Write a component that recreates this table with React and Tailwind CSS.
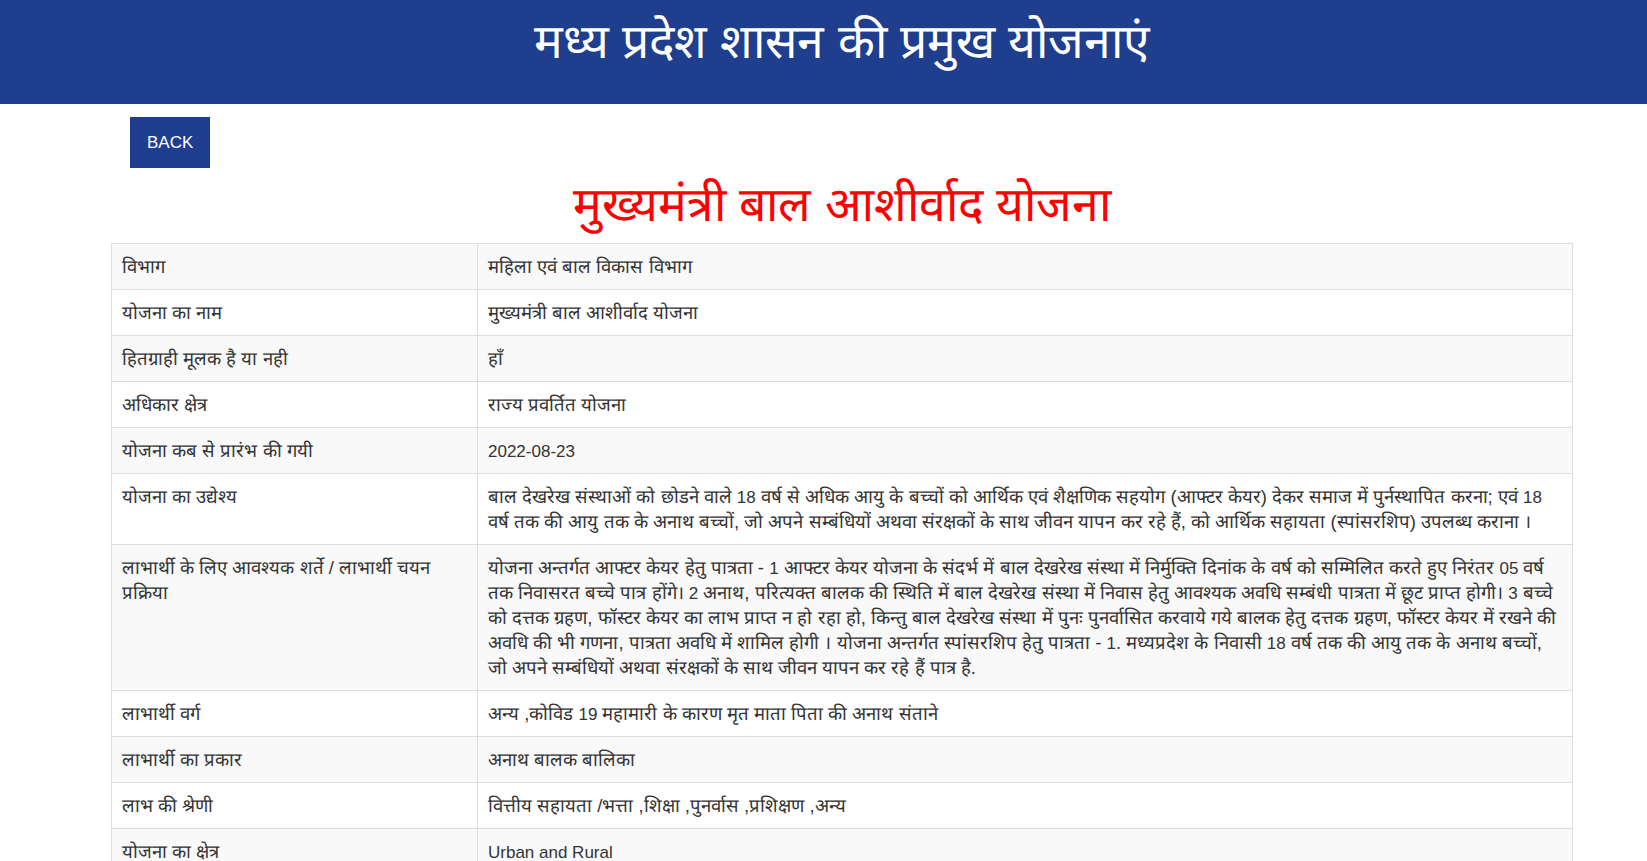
import React from "react";

const rows = [
  ["विभाग", "महिला एवं बाल विकास विभाग"],
  ["योजना का नाम", "मुख्यमंत्री बाल आशीर्वाद योजना"],
  ["हितग्राही मूलक है या नही", "हाँ"],
  ["अधिकार क्षेत्र", "राज्य प्रवर्तित योजना"],
  ["योजना कब से प्रारंभ की गयी", "2022-08-23"],
  [
    "योजना का उद्येश्य",
    "बाल देखरेख संस्थाओं को छोडने वाले 18 वर्ष से अधिक आयु के बच्चों को आर्थिक एवं शैक्षणिक सहयोग (आफ्टर केयर) देकर समाज में पुर्नस्थापित करना; एवं 18 वर्ष तक की आयु तक के अनाथ बच्चों, जो अपने सम्बंधियों अथवा संरक्षकों के साथ जीवन यापन कर रहे हैं, को आर्थिक सहायता (स्पांसरशिप) उपलब्ध कराना ।",
  ],
  [
    "लाभार्थी के लिए आवश्यक शर्ते / लाभार्थी चयन प्रक्रिया",
    "योजना अन्तर्गत आफ्टर केयर हेतु पात्रता - 1 आफ्टर केयर योजना के संदर्भ में बाल देखरेख संस्था में निर्मुक्ति दिनांक के वर्ष को सम्मिलित करते हुए निरंतर 05 वर्ष तक निवासरत बच्चे पात्र होंगे। 2 अनाथ, परित्यक्त बालक की स्थिति में बाल देखरेख संस्था में निवास हेतु आवश्यक अवधि सम्बंधी पात्रता में छूट प्राप्त होगी। 3 बच्चे को दत्तक ग्रहण, फॉस्टर केयर का लाभ प्राप्त न हो रहा हो, किन्तु बाल देखरेख संस्था में पुनः पुनर्वासित करवाये गये बालक हेतु दत्तक ग्रहण, फॉस्टर केयर में रखने की अवधि की भी गणना, पात्रता अवधि में शामिल होगी । योजना अन्तर्गत स्पांसरशिप हेतु पात्रता - 1. मध्यप्रदेश के निवासी 18 वर्ष तक की आयु तक के अनाथ बच्चों, जो अपने सम्बंधियों अथवा संरक्षकों के साथ जीवन यापन कर रहे हैं पात्र है.",
  ],
  ["लाभार्थी वर्ग", "अन्य ,कोविड 19 महामारी के कारण मृत माता पिता की अनाथ संताने"],
  ["लाभार्थी का प्रकार", "अनाथ बालक बालिका"],
  ["लाभ की श्रेणी", "वित्तीय सहायता /भत्ता ,शिक्षा ,पुनर्वास ,प्रशिक्षण ,अन्य"],
  ["योजना का क्षेत्र", "Urban and Rural"],
];

function Mixed({ text }) {
  const parts = text.split(/([A-Za-z0-9][A-Za-z0-9\-\. ]*[A-Za-z0-9]|[0-9])/);
  return (
    <>
      {parts.map((p, i) =>
        i % 2 === 1 ? (
          <span key={i} className="text-[17px] leading-none">
            {p}
          </span>
        ) : (
          <React.Fragment key={i}>{p}</React.Fragment>
        )
      )}
    </>
  );
}

export default function App() {
  return (
    <div className="min-h-screen bg-white text-[#333] font-['Liberation_Sans',Arial,sans-serif]">
      <header className="h-[104px] bg-[#1f3e8d]">
        <div className="ml-[111px] w-[1462px]">
          <h1 className="pt-[12px] text-center text-[48px] leading-[60px] text-white font-normal">
            मध्य प्रदेश शासन की प्रमुख योजनाएं
          </h1>
        </div>
      </header>
      <div className="ml-[111px] w-[1462px]">
        <div className="pl-[19px] pt-[13px]">
          <button className="bg-[#1f3e8d] px-[17px] py-[13px] text-[17px] leading-[25px] text-white">
            BACK
          </button>
        </div>
        <h2 className="mt-[3px] mb-[4px] text-center text-[48px] leading-[68px] text-[#ff0000] font-normal">
          मुख्यमंत्री बाल आशीर्वाद योजना
        </h2>
        <table className="w-full table-fixed border-collapse border border-[#ddd] text-[18.5px] leading-[25px]">
          <tbody>
            {rows.map(([k, v], i) => (
              <tr key={i} className={i % 2 === 0 ? "bg-[#f9f9f9]" : "bg-white"}>
                <td className="w-[366px] border border-[#ddd] px-[10px] py-[10px] align-top">
                  <Mixed text={k} />
                </td>
                <td className="border border-[#ddd] px-[10px] py-[10px] align-top">
                  <Mixed text={v} />
                </td>
              </tr>
            ))}
          </tbody>
        </table>
      </div>
    </div>
  );
}
